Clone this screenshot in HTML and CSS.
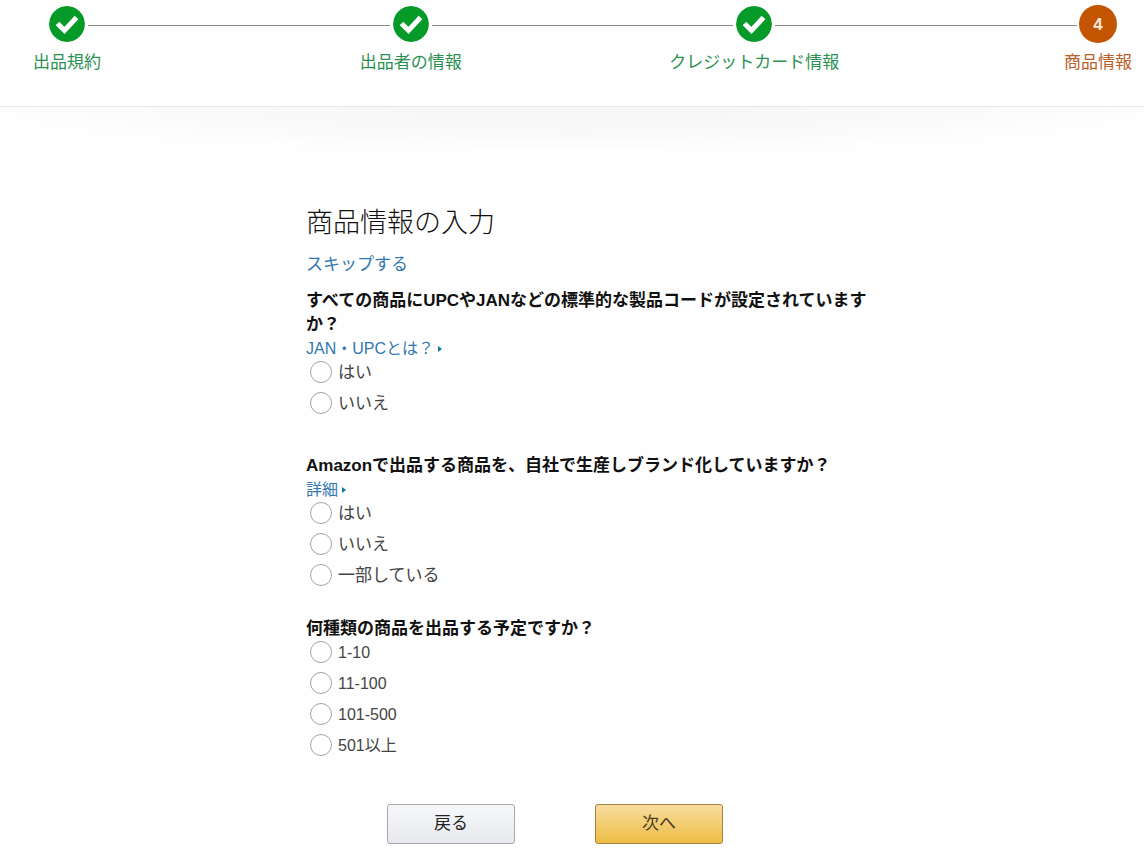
FILE: index.html
```html
<!DOCTYPE html>
<html lang="ja">
<head>
<meta charset="utf-8">
<meta name="viewport" content="width=device-width, initial-scale=1">
<title>商品情報の入力</title>
<link rel="stylesheet" href="styles.css">
</head>
<body>
<header class="header">
  <ol class="steps">
    <li class="step">
      <div class="step-body">
        <svg class="marker" viewBox="0 0 36 36" aria-hidden="true"><circle cx="18" cy="18" r="18"/><path d="M8.500 17.500L15.500 24.500L27.500 11.500"/></svg>
        <span class="step-label">出品規約</span>
      </div>
      <span class="line"></span>
    </li>
    <li class="step">
      <div class="step-body">
        <svg class="marker" viewBox="0 0 36 36" aria-hidden="true"><circle cx="18" cy="18" r="18"/><path d="M8.500 17.500L15.500 24.500L27.500 11.500"/></svg>
        <span class="step-label">出品者の情報</span>
      </div>
      <span class="line"></span>
    </li>
    <li class="step">
      <div class="step-body">
        <svg class="marker" viewBox="0 0 36 36" aria-hidden="true"><circle cx="18" cy="18" r="18"/><path d="M8.500 17.500L15.500 24.500L27.500 11.500"/></svg>
        <span class="step-label">クレジットカード情報</span>
      </div>
      <span class="line"></span>
    </li>
    <li class="step step-current" aria-current="step">
      <div class="step-body">
        <span class="marker number">4</span>
        <span class="step-label">商品情報</span>
      </div>
    </li>
  </ol>
</header>
<main class="main">
  <form class="form">
    <h1 class="title">商品情報の入力</h1>
    <a class="link skip" href="#">スキップする</a>

    <fieldset class="question">
      <legend class="legend">すべての商品にUPCやJANなどの標準的な製品コードが設定されていますか？</legend>
      <a class="link more" href="#">JAN・UPCとは？</a>
      <div class="options">
        <label class="option"><input class="radio" type="radio" name="code">はい</label>
        <label class="option"><input class="radio" type="radio" name="code">いいえ</label>
      </div>
    </fieldset>

    <fieldset class="question question-brand">
      <legend class="legend">Amazonで出品する商品を、自社で生産しブランド化していますか？</legend>
      <a class="link more" href="#">詳細</a>
      <div class="options">
        <label class="option"><input class="radio" type="radio" name="brand">はい</label>
        <label class="option"><input class="radio" type="radio" name="brand">いいえ</label>
        <label class="option"><input class="radio" type="radio" name="brand">一部している</label>
      </div>
    </fieldset>

    <fieldset class="question question-count">
      <legend class="legend">何種類の商品を出品する予定ですか？</legend>
      <div class="options options-numeric">
        <label class="option"><input class="radio" type="radio" name="count">1-10</label>
        <label class="option"><input class="radio" type="radio" name="count">11-100</label>
        <label class="option"><input class="radio" type="radio" name="count">101-500</label>
        <label class="option"><input class="radio" type="radio" name="count">501以上</label>
      </div>
    </fieldset>

    <div class="actions">
      <button class="button" type="button">戻る</button>
      <button class="button button-primary" type="submit">次へ</button>
    </div>
  </form>
</main>
</body>
</html>
```

FILE: styles.css
```css
* {
  box-sizing: border-box;
}

body {
  margin: 0;
  background: #fefefe;
  color: #111;
  font-family: "Liberation Sans", "Noto Sans CJK JP", sans-serif;
  font-size: 17px;
  line-height: 24px;
}

.header {
  padding: 5px 12px 31px 33px;
}

.steps {
  display: flex;
  margin: 0;
  padding: 0;
  list-style: none;
}

.step {
  display: flex;
  flex: 1;
  color: #2a9150;
}

.step-current {
  flex: none;
  color: #b8602a;
}

.step-body {
  display: flex;
  flex: none;
  flex-direction: column;
  align-items: center;
  width: 68px;
}

.marker {
  width: 38px;
  height: 38px;
  padding: 1px;
  border-radius: 50%;
  fill: #069a28;
}

.marker path {
  fill: none;
  stroke: #fff;
  stroke-width: 5;
}

.number {
  background: #c45500;
  color: #fbeadb;
  font-size: 17px;
  font-weight: 700;
  line-height: 38px;
  text-align: center;
}

.step-label {
  margin-top: 8px;
  white-space: nowrap;
}

.line {
  flex: 1;
  height: 1px;
  margin: 20px -13px 0;
  background: #858a85;
}

.main {
  padding: 98px 12px 12px;
  border-top: 1px solid #e8e8e8;
  background: radial-gradient(ellipse 50% 44px at 50% 0, #f5f5f5, #fafafa 70%, #fefefe) no-repeat;
}

.form {
  max-width: 600px;
  margin: 0 auto;
  padding-left: 34px;
}

.title {
  margin: 0 0 12px;
  font-size: 27px;
  font-weight: 300;
  line-height: 36px;
}

.link {
  display: block;
  width: fit-content;
  color: #3277b0;
  text-decoration: none;
}

.skip {
  margin-bottom: 12px;
}

.more {
  display: flex;
  align-items: center;
  gap: 4px;
  font-size: 16px;
}

.more::after {
  content: "";
  border: solid transparent;
  border-width: 3px 0 3px 4px;
  border-left-color: #087c9c;
}

.question {
  min-width: 0;
  margin: 0;
  padding: 0;
  border: 0;
}

.question-brand {
  margin: 38px 0 29px;
}

.legend {
  padding: 0;
  font-weight: 700;
}

.options {
  display: flex;
  flex-direction: column;
  align-items: flex-start;
  gap: 7px;
  padding-left: 4px;
  color: #444;
}

.options-numeric {
  font-size: 16px;
}

.option {
  display: flex;
  align-items: flex-start;
  gap: 6px;
}

.radio {
  appearance: none;
  width: 22px;
  height: 22px;
  margin: 0;
  border: 1px solid #a4a4a4;
  border-radius: 50%;
  background: #fff;
}

.radio:checked {
  border: 6px solid #c45500;
}

.actions {
  display: flex;
  gap: 80px;
  margin-top: 46px;
  padding-left: 81px;
}

.button {
  width: 128px;
  height: 40px;
  padding: 0;
  border: 1px solid #a6a8ae;
  border-radius: 3px;
  background: linear-gradient(#f7f8fa, #e7e9ee);
  color: #222;
  font: inherit;
}

.button-primary {
  border-color: #a4843c;
  background: linear-gradient(#f7dda0, #edbd43);
  color: #4a3c1c;
}
```
